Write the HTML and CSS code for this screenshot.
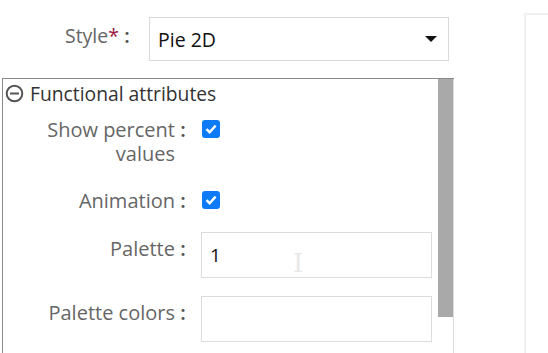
FILE: index.html
```html
<!DOCTYPE html>
<html lang="en">
  <head>
    <meta charset="utf-8">
    <title>Chart settings</title>
    <link rel="stylesheet" href="styles.css">
  </head>
  <body>
    <div class="page">
      <div class="editor">
        <div class="style-row">
          <label class="style-label">Style<span class="req">*</span><span class="colon">：</span></label>
          <div class="select">
            <span>Pie 2D</span>
            <span class="caret"></span>
          </div>
        </div>

        <div class="panel">
          <div class="panel-body">
            <div class="panel-title">
              <svg class="toggle" width="19" height="19" viewBox="0 0 19 19">
                <circle cx="9.5" cy="9.5" r="7.8" fill="none" stroke="#555" stroke-width="2"/>
                <rect x="5" y="8.5" width="9" height="2" fill="#555"/>
              </svg>
              Functional attributes
            </div>

            <div class="field field--first">
              <label class="field-label">Show percent<span class="colon">：</span><br>values<span class="colon-pad"></span></label>
              <span class="check"><svg width="12" height="10" viewBox="0 0 12 10"><path d="M1.5 5.2 L4.6 8.2 L10.6 1.6" fill="none" stroke="#fff" stroke-width="2.4"/></svg></span>
            </div>

            <div class="field field--anim">
              <label class="field-label">Animation<span class="colon">：</span></label>
              <span class="check"><svg width="12" height="10" viewBox="0 0 12 10"><path d="M1.5 5.2 L4.6 8.2 L10.6 1.6" fill="none" stroke="#fff" stroke-width="2.4"/></svg></span>
            </div>

            <div class="field field--input">
              <label class="field-label">Palette<span class="colon">：</span></label>
              <div class="text-input">1<span class="ibeam">I</span></div>
            </div>

            <div class="field field--input field--last">
              <label class="field-label">Palette colors<span class="colon">：</span></label>
              <div class="text-input"></div>
            </div>
          </div>
          <div class="scrollbar"><div class="thumb"></div></div>
        </div>
      </div>

      <div class="preview"></div>
    </div>
  </body>
</html>
```

FILE: styles.css
```css
html, body {
  margin: 0;
  background: #fff;
  font-family: "Open Sans", "Noto Sans CJK TC", sans-serif;
  overflow: hidden;
}

.page {
  display: flex;
  height: 353px;
}

.editor {
  width: 452px;
  padding-left: 2px;
}

/* style selector */
.style-row {
  display: flex;
  align-items: center;
  height: 44px;
  margin-top: 17px;
}

.style-label {
  width: 133px;
  margin-right: 14px;
  margin-top: -7px;
  text-align: right;
  color: #666;
  font-size: 19.5px;
}

.req {
  color: #a0143c;
}

.colon {
  font-family: "Noto Sans CJK TC", sans-serif;
  font-weight: bold;
  color: #555;
  font-size: 16px;
  line-height: 1;
}

.colon-pad {
  display: inline-block;
  width: 16px;
}

.select {
  display: flex;
  align-items: center;
  justify-content: space-between;
  width: 300px;
  height: 44px;
  box-sizing: border-box;
  border: 1px solid #d9d9d9;
  padding: 0 11px 0 8px;
  font-size: 19.5px;
  color: #111;
}

.caret {
  width: 0;
  height: 0;
  border-left: 6px solid transparent;
  border-right: 6px solid transparent;
  border-top: 6px solid #111;
}

/* functional attributes panel */
.panel {
  display: flex;
  margin-top: 17px;
  height: 280px;
  border-top: 1px solid #8a8a8a;
  border-left: 1px solid #8a8a8a;
}

.panel-body {
  flex: 1;
}

.panel-title {
  display: flex;
  align-items: center;
  gap: 6px;
  height: 29px;
  padding-left: 2px;
  font-size: 19.3px;
  color: #333;
}

.field {
  display: flex;
  align-items: flex-start;
}

.field--first {
  margin-top: 10px;
}

.field--anim {
  margin-top: 23px;
}

.field--input {
  margin-top: 19px;
}

.field--last {
  margin-top: 18px;
}

.field-label {
  width: 188px;
  margin-right: 11px;
  text-align: right;
  font-size: 20px;
  line-height: 24px;
  color: #666;
}

.field--input .field-label {
  padding-top: 5px;
}

.check {
  display: flex;
  align-items: center;
  justify-content: center;
  width: 18px;
  height: 18px;
  margin-top: 2px;
  border-radius: 3px;
  background: #0d7bf7;
}

.text-input {
  position: relative;
  width: 231px;
  height: 46px;
  margin-left: -1px;
  box-sizing: border-box;
  border: 1px solid #dcdcdc;
  padding: 9px 8px;
  font-size: 19px;
  color: #111;
}

.ibeam {
  position: absolute;
  left: 91px;
  top: 17px;
  font-family: "DejaVu Serif", serif;
  font-size: 26px;
  line-height: 26px;
  color: #e8e8e8;
}

.scrollbar {
  width: 15px;
  border-right: 1px solid #dcdcdc;
}

.thumb {
  height: 238px;
  background: #a9a9a9;
}

/* preview pane */
.preview {
  margin-left: 70px;
  margin-top: 13px;
  flex: 1;
  border-top: 2px solid #f0f0f0;
  border-left: 2px solid #f0f0f0;
}
```
